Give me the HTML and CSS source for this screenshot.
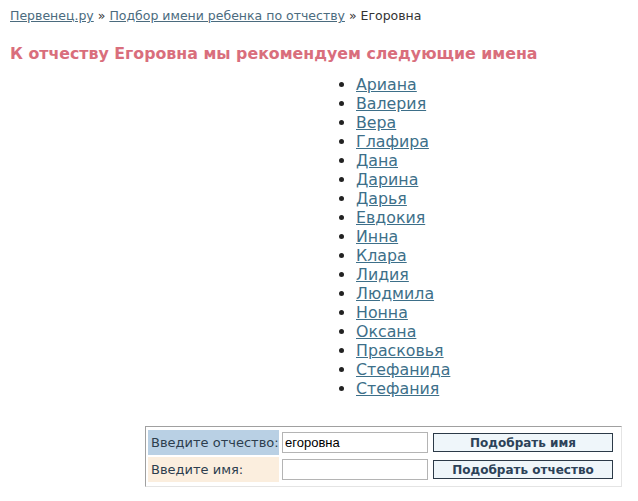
FILE: index.html
```html
<!DOCTYPE html>
<html lang="ru">
<head>
<meta charset="utf-8">
<title>Егоровна</title>
<link rel="stylesheet" href="styles.css">
</head>
<body>
<div class="crumbs"><a href="#">Первенец.ру</a> » <a href="#">Подбор имени ребенка по отчеству</a> » Егоровна</div>
<h1 class="title">К отчеству Егоровна мы рекомендуем следующие имена</h1>
<ul class="names">
<li><a href="#">Ариана</a></li>
<li><a href="#">Валерия</a></li>
<li><a href="#">Вера</a></li>
<li><a href="#">Глафира</a></li>
<li><a href="#">Дана</a></li>
<li><a href="#">Дарина</a></li>
<li><a href="#">Дарья</a></li>
<li><a href="#">Евдокия</a></li>
<li><a href="#">Инна</a></li>
<li><a href="#">Клара</a></li>
<li><a href="#">Лидия</a></li>
<li><a href="#">Людмила</a></li>
<li><a href="#">Нонна</a></li>
<li><a href="#">Оксана</a></li>
<li><a href="#">Прасковья</a></li>
<li><a href="#">Стефанида</a></li>
<li><a href="#">Стефания</a></li>
</ul>
<div class="form">
  <div class="row">
    <div class="label blue">Введите отчество:</div>
    <div class="field"><input class="input" type="text" value="егоровна"></div>
    <div class="action"><button class="btn">Подобрать имя</button></div>
  </div>
  <div class="row">
    <div class="label peach">Введите имя:</div>
    <div class="field"><input class="input" type="text" value=""></div>
    <div class="action"><button class="btn">Подобрать отчество</button></div>
  </div>
</div>
</body>
</html>
```
FILE: styles.css
```css
body {
  margin: 8px;
  background: #ffffff;
  font-family: "DejaVu Sans", Verdana, sans-serif;
  color: #222;
}
.crumbs {
  padding-left: 2px;
  font-size: 12.5px;
  line-height: 16px;
  color: #333;
}
.crumbs a {
  color: #4b6b7e;
  text-decoration: underline;
}
.title {
  margin: 20px 0 0 2px;
  font-size: 15.8px;
  line-height: 20px;
  font-weight: bold;
  color: #d96e7c;
}
.names {
  margin: 11px 0 0 0;
  padding-left: 348px;
  font-size: 15.8px;
}
.names li {
  height: 19px;
  line-height: 19px;
}
.names a {
  color: #3d6f89;
  text-decoration: underline;
}
.form {
  margin: 28px 0 0 137px;
  width: 470px;
  border: 1px solid;
  border-color: #a0a0a0 #e4e4e4 #e4e4e4 #a0a0a0;
  padding: 3px 3px 4px 2px;
  display: flex;
  flex-direction: column;
  gap: 2px;
}
.row {
  display: flex;
  align-items: center;
  height: 25px;
}
.label {
  width: 128px;
  height: 25px;
  line-height: 25px;
  padding-left: 3px;
  font-size: 13px;
  color: #2d3e4e;
}
.blue { background: #b9d0e4; }
.peach { background: #fbeede; }
.field {
  margin-left: 3px;
}
.input {
  width: 140px;
  height: 17px;
  padding: 1px 2px;
  border: 1px solid #b4b4b4;
  font-family: "Liberation Sans", Arial, sans-serif;
  font-size: 13px;
  color: #000;
  display: block;
}
.action {
  margin-left: 5px;
}
.btn {
  width: 180px;
  height: 19px;
  padding: 0;
  border: 1px solid #2c3a48;
  background: #eff6fa;
  font-family: "DejaVu Sans", Tahoma, sans-serif;
  font-size: 12px;
  font-weight: bold;
  color: #2c4258;
  display: block;
}
```
